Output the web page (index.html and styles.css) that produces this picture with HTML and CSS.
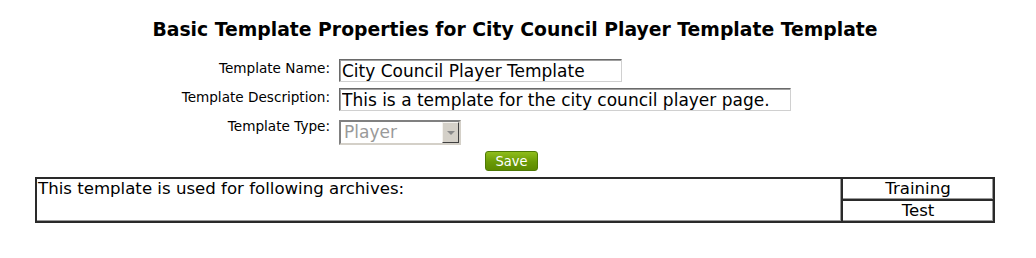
FILE: index.html
```html
<!DOCTYPE html>
<html>
<head>
<meta charset="utf-8">
<link rel="stylesheet" href="styles.css">
</head>
<body>
<h1 class="title">Basic Template Properties for City Council Player Template Template</h1>
<div class="form">
  <label class="label">Template Name:</label>
  <div class="field"><input class="text name" type="text" value="City Council Player Template"></div>
  <label class="label">Template Description:</label>
  <div class="field"><input class="text desc" type="text" value="This is a template for the city council player page."></div>
  <label class="label">Template Type:</label>
  <div class="field">
    <div class="select"><span class="select-value">Player</span><span class="select-arrow"><span class="tri"></span></span></div>
  </div>
</div>
<div class="actions"><button class="save" type="button">Save</button></div>
<table class="archives">
  <tr>
    <td class="info" rowspan="2">This template is used for following archives:</td>
    <td class="arch">Training</td>
  </tr>
  <tr>
    <td class="arch">Test</td>
  </tr>
</table>
</body>
</html>
```
FILE: styles.css
```css
body {
  margin: 8px;
  font-family: "DejaVu Sans", Verdana, sans-serif;
  color: #000;
  background: #fff;
}
.title {
  margin: 10px 0 0 0;
  padding-right: 6px;
  font-size: 18.8px;
  font-weight: bold;
  text-align: center;
  line-height: 24px;
}
.form {
  display: grid;
  grid-template-columns: 322px auto;
  column-gap: 9px;
  row-gap: 6px;
  margin-top: 17px;
  align-items: start;
}
.label {
  text-align: right;
  font-size: 13.6px;
  line-height: 15px;
  padding-top: 2px;
}
.text {
  display: block;
  box-sizing: border-box;
  height: 23px;
  margin: 0;
  padding: 0 2px;
  font-family: "DejaVu Sans", Verdana, sans-serif;
  font-size: 17px;
  color: #000;
  border: 1px solid;
  border-color: #6a6a6a #d0d0d0 #d0d0d0 #6a6a6a;
  box-shadow: inset 1px 1px 0 #a0a0a0;
  background: #fff;
  outline: none;
}
.name { width: 283px; }
.desc { width: 452px; }
.select {
  margin-top: 3px;
  box-sizing: border-box;
  width: 122px;
  height: 25px;
  display: flex;
  border: 2px solid;
  border-color: #808080 #d4d0c8 #d4d0c8 #808080;
  background: #fff;
}
.select-value {
  flex: 1;
  font-size: 17px;
  line-height: 21px;
  color: #9a9a9a;
  padding-left: 3px;
}
.select-arrow {
  width: 17px;
  box-sizing: border-box;
  background: #d4d0c8;
  border: 1px solid;
  border-color: #f4f2ee #404040 #404040 #f4f2ee;
  display: flex;
  align-items: center;
  justify-content: center;
}
.tri {
  width: 0;
  height: 0;
  border-left: 4px solid transparent;
  border-right: 4px solid transparent;
  border-top: 4px solid #8a8a8a;
}
.actions {
  display: flex;
  justify-content: center;
  margin-top: 6px;
  padding-right: 13px;
}
.save {
  box-sizing: border-box;
  width: 53px;
  height: 20px;
  padding: 0;
  font-family: "DejaVu Sans Condensed", "DejaVu Sans", sans-serif;
  font-size: 14.5px;
  color: #fff;
  background: linear-gradient(#8fbd1c, #6a9a06 55%, #5d8a00);
  border: 1px solid #4f7a05;
  border-radius: 3px;
  line-height: 17px;
}
.archives {
  margin: 6px 0 0 27px;
  width: 960px;
  border-collapse: separate;
  border-spacing: 0;
  border: 1px solid #2a2a2a;
}
.archives td {
  border: 1px solid #2a2a2a;
  box-shadow: inset -1px -1px 0 #9a9a9a;
  padding: 0 1px;
  font-size: 16.6px;
  line-height: 20px;
}
.info {
  vertical-align: top;
}
.arch {
  width: 148px;
  text-align: center;
}
```
